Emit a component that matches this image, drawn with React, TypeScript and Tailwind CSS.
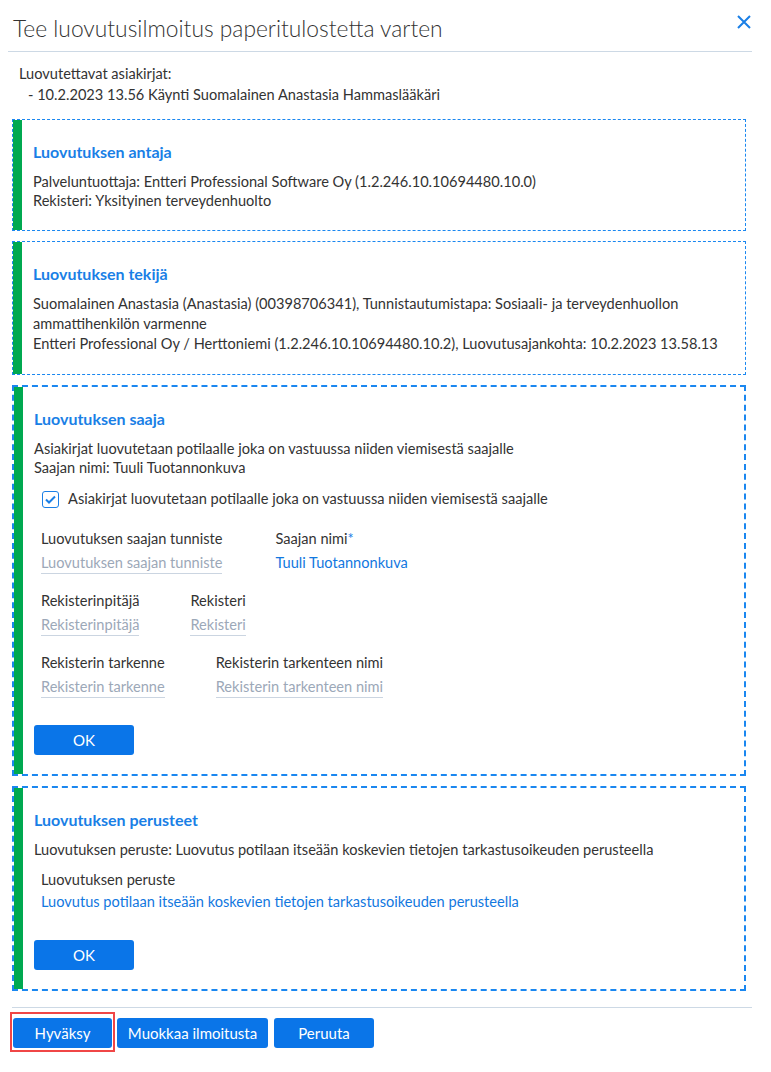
import React from 'react';

function Section({ title, thick, children }: { title: string; thick?: boolean; children: React.ReactNode }) {
  return (
    <div
      className={
        'flex border-[#1a87f0] ' +
        (thick ? 'border-2 border-dashed' : 'border border-dashed')
      }
    >
      <div className="w-[9px] shrink-0 bg-[#00a950]" />
      <div className={'flex-1 pl-[11px] pr-4 pt-[22px] ' + (thick ? 'pb-[19px]' : 'pb-[20px]')}>
        <h3 className="text-[16px] leading-[20px] font-bold text-[#1a7fe6]">{title}</h3>
        <div className="mt-[10px]">{children}</div>
      </div>
    </div>
  );
}

function Field({ label, value, required, filled }: { label: string; value: string; required?: boolean; filled?: boolean }) {
  return (
    <div className="flex flex-col items-start">
      <span className="leading-[20px] text-[#333]">
        {label}
        {required && <span className="text-[#1a7fe6]">*</span>}
      </span>
      <span
        className={
          'mt-[4px] leading-[20px] ' +
          (filled ? 'text-[#1278e0]' : 'text-[#9ca8b8] border-b border-[#cbd5e1]')
        }
      >
        {value}
      </span>
    </div>
  );
}

function OkButton() {
  return (
    <button className="w-[100px] h-[30px] rounded-[3px] bg-[#0a75e8] text-white text-[15px]">OK</button>
  );
}

export default function App() {
  return (
    <div className="w-[771px] h-[1072px] bg-white font-['Lato',sans-serif] text-[14.6px] text-[#333]">
      <div className="flex items-start justify-between pl-[13px] pr-[20px] pt-[14px]">
        <h2 className="text-[22.8px] leading-[28px] font-light text-[#333]">
          Tee luovutusilmoitus paperitulostetta varten
        </h2>
        <svg width="14" height="14" viewBox="0 0 14 14" className="mt-[1px]">
          <path d="M1 1 L13 13 M13 1 L1 13" stroke="#1a7fe6" strokeWidth="2" />
        </svg>
      </div>
      <div className="mx-[8px] mt-[9px] mr-[19px] border-t border-[#cdd9e5]" />

      <div className="px-[19px] pt-[11px] leading-[21px]">
        <div>Luovutettavat asiakirjat:</div>
        <div className="pl-[9px]">- 10.2.2023 13.56 Käynti Suomalainen Anastasia Hammaslääkäri</div>
      </div>

      <div className="ml-[12px] mr-[25px] mt-[14px] flex flex-col gap-[10px]">
        <Section title="Luovutuksen antaja">
          <div className="leading-[19px]">
            <div>Palveluntuottaja: Entteri Professional Software Oy (1.2.246.10.10694480.10.0)</div>
            <div>Rekisteri: Yksityinen terveydenhuolto</div>
          </div>
        </Section>

        <Section title="Luovutuksen tekijä">
          <div className="leading-[20px]">
            <div>
              Suomalainen Anastasia (Anastasia) (00398706341), Tunnistautumistapa: Sosiaali- ja terveydenhuollon
              ammattihenkilön varmenne
            </div>
            <div>
              Entteri Professional Oy / Herttoniemi (1.2.246.10.10694480.10.2), Luovutusajankohta: 10.2.2023 13.58.13
            </div>
          </div>
        </Section>

        <Section title="Luovutuksen saaja" thick>
          <div className="leading-[19px]">
            <div>Asiakirjat luovutetaan potilaalle joka on vastuussa niiden viemisestä saajalle</div>
            <div>Saajan nimi: Tuuli Tuotannonkuva</div>
          </div>
          <label className="mt-[12px] ml-[8px] flex items-center gap-[9px]">
            <span className="flex h-[17px] w-[17px] items-center justify-center rounded-[3px] border border-[#1a7fe6]">
              <svg width="11" height="9" viewBox="0 0 11 9">
                <path d="M1 4.5 L4 7.5 L10 1.5" fill="none" stroke="#1a7fe6" strokeWidth="2" />
              </svg>
            </span>
            <span className="leading-[20px]">Asiakirjat luovutetaan potilaalle joka on vastuussa niiden viemisestä saajalle</span>
          </label>

          <div className="ml-[7px] mt-[20px] flex flex-col gap-[17px]">
            <div className="flex gap-[53px]">
              <Field label="Luovutuksen saajan tunniste" value="Luovutuksen saajan tunniste" />
              <Field label="Saajan nimi" value="Tuuli Tuotannonkuva" required filled />
            </div>
            <div className="flex gap-[51px]">
              <Field label="Rekisterinpitäjä" value="Rekisterinpitäjä" />
              <Field label="Rekisteri" value="Rekisteri" />
            </div>
            <div className="flex gap-[51px]">
              <Field label="Rekisterin tarkenne" value="Rekisterin tarkenne" />
              <Field label="Rekisterin tarkenteen nimi" value="Rekisterin tarkenteen nimi" />
            </div>
          </div>

          <div className="mt-[27px]">
            <OkButton />
          </div>
        </Section>

        <Section title="Luovutuksen perusteet" thick>
          <div className="leading-[20px]">
            Luovutuksen peruste: Luovutus potilaan itseään koskevien tietojen tarkastusoikeuden perusteella
          </div>
          <div className="ml-[7px] mt-[10px] flex flex-col">
            <span className="leading-[20px]">Luovutuksen peruste</span>
            <span className="mt-[2px] leading-[20px] text-[#1278e0]">
              Luovutus potilaan itseään koskevien tietojen tarkastusoikeuden perusteella
            </span>
          </div>
          <div className="mt-[28px]">
            <OkButton />
          </div>
        </Section>
      </div>

      <div className="ml-[12px] mr-[19px] mt-[16px] border-t border-[#cdd9e5]" />

      <div className="ml-[10px] mt-[4px] flex items-center">
        <div className="border-2 border-[#f04646] pt-[4px] pb-[2px] px-[1px]">
          <button className="h-[30px] w-[99px] rounded-[3px] bg-[#0a75e8] text-white text-[15px]">Hyväksy</button>
        </div>
        <button className="ml-[2px] mt-[2px] h-[30px] w-[151px] rounded-[3px] bg-[#0a75e8] text-white text-[15px]">Muokkaa ilmoitusta</button>
        <button className="ml-[6px] mt-[2px] h-[30px] w-[100px] rounded-[3px] bg-[#0a75e8] text-white text-[15px]">Peruuta</button>
      </div>
    </div>
  );
}
